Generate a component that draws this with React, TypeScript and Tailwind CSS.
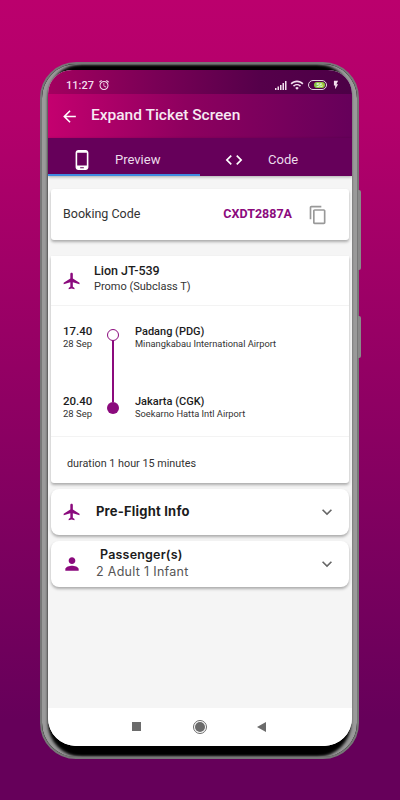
import { MdAlarm, MdArrowBack, MdCode, MdContentCopy, MdFlashOn, MdFlight, MdKeyboardArrowDown, MdPerson, MdPhoneAndroid, MdWifi } from "react-icons/md";

const roboto = { fontFamily: "Roboto, sans-serif" };

function StatusBar() {
    return (
        <div className="h-[24px] shrink-0 flex items-center justify-between pt-[6px] pl-[18px] pr-[11px] bg-[linear-gradient(90deg,#a3005f,#7a0056_35%,#55004a_70%,#4c0046)] text-[#f3dfee]">
            <div className="flex items-center gap-[4px]">
                <span className="text-[11px] font-medium leading-none">11:27</span>
                <MdAlarm size={12} />
            </div>
            <div className="flex items-center gap-[3px]">
                <svg width="12" height="9" viewBox="0 0 12 9" fill="currentColor">
                    <rect x="0" y="7" width="1.5" height="2" />
                    <rect x="2.5" y="5.5" width="1.5" height="3.5" />
                    <rect x="5" y="4" width="1.5" height="5" />
                    <rect x="7.5" y="2" width="1.5" height="7" />
                    <rect x="10" y="0" width="1.5" height="9" />
                </svg>
                <MdWifi size={14} />
                <svg width="20" height="10" viewBox="0 0 20 10" className="ml-[1px]">
                    <rect x="0.5" y="0.5" width="18" height="9" rx="4.5" fill="none" stroke="#e6d5e2" strokeWidth="1" />
                    <rect x="6" y="2" width="11" height="6" rx="3" fill="#8cc63f" />
                    <text x="11.5" y="7.3" fontSize="6" textAnchor="middle" fill="#fff">56</text>
                </svg>
                <MdFlashOn size={10} />
            </div>
        </div>
    );
}

function TabBar() {
    return (
        <div className="h-[38px] shrink-0 flex bg-[#66005a] text-[#ecdcea] text-[13px] shadow-[0_1px_3px_rgba(0,0,0,0.3)] z-10">
            <div className="w-[152px] h-full flex items-center border-b-2 border-[#3f8ae0] pt-[8px] pl-[23px]">
                <MdPhoneAndroid size={22} className="text-white" />
                <span className="ml-[22px]">Preview</span>
            </div>
            <div className="flex-1 h-full flex items-center pt-[6px] pl-[24px]">
                <MdCode size={20} className="text-white" />
                <span className="ml-[24px]">Code</span>
            </div>
        </div>
    );
}

function FlightStop({ time, city, airport }: { time: string; city: string; airport: string }) {
    return (
        <div className="flex items-start">
            <div className="w-[84px] pl-[12px]">
                <p className="text-[11.5px] font-medium text-[#1c1c1c] leading-[13px]">{time}</p>
                <p className="text-[9.5px] text-[#333] leading-[11px]">28 Sep</p>
            </div>
            <div>
                <p className="text-[11px] font-medium text-[#1c1c1c] leading-[13px]">{city}</p>
                <p className="text-[9.3px] text-[#333] leading-[11px]">{airport}</p>
            </div>
        </div>
    );
}

function FlightCard() {
    return (
        <div className="mt-[16px] mx-[3px] h-[227px] bg-white rounded-b-[3px] shadow-[0_2px_3px_rgba(0,0,0,0.3)] flex flex-col">
            <div className="h-[50px] flex items-center border-b border-[#f3f3f3]">
                <MdFlight size={20} className="ml-[11px] text-[#8b0a7d]" />
                <div className="ml-[12px] -mt-[4px]">
                    <p className="text-[12.5px] font-medium text-[#1c1c1c] leading-[16px]">Lion JT-539</p>
                    <p className="text-[11px] text-[#333] leading-[16px]">Promo (Subclass T)</p>
                </div>
            </div>
            <div className="relative h-[131px] border-b border-[#f3f3f3] pt-[19px] flex flex-col gap-[46px]">
                <FlightStop time="17.40" city="Padang (PDG)" airport="Minangkabau International Airport" />
                <FlightStop time="20.40" city="Jakarta (CGK)" airport="Soekarno Hatta Intl Airport" />
                <div className="absolute left-[56px] top-[23px] w-[12px] h-[12px] rounded-full border-[1.5px] border-[#8b0a7d] bg-white z-10" />
                <div className="absolute left-[61px] top-[32px] w-[1.5px] h-[64px] bg-[#8b0a7d]" />
                <div className="absolute left-[56px] top-[96px] w-[12px] h-[12px] rounded-full bg-[#8b0a7d]" />
            </div>
            <div className="flex-1 flex items-center pl-[16px] pt-[8px] text-[10.8px] text-[#333]">duration 1 hour 15 minutes</div>
        </div>
    );
}

export default function App() {
    return (
        <div className="relative w-[400px] h-[800px] overflow-hidden pt-[62px] pl-[40px] bg-[linear-gradient(180deg,#bb006d_0%,#b3006b_15%,#66005a_90%,#66005a_100%)]" style={roboto}>
            {/* volume and power keys */}
            <div className="absolute left-[358px] top-[190px] w-[3px] h-[80px] bg-[#8a8a8a] rounded-r-[2px]" />
            <div className="absolute left-[358px] top-[316px] w-[3px] h-[42px] bg-[#8a8a8a] rounded-r-[2px]" />

            <div className="w-[319px] h-[697px] rounded-[36px] border-2 border-[#777] bg-black pt-[6px] pl-[6px] pr-[5px] pb-[11px] shadow-[inset_6px_0_3px_#9a9a9a,inset_-6px_0_3px_#9a9a9a]">
                <div className="h-full rounded-t-[24px] rounded-b-[28px] overflow-hidden bg-white flex flex-col">
                    <StatusBar />
                    <div className="h-[44px] shrink-0 flex items-center pl-[12px] bg-[linear-gradient(90deg,#c4006f,#8e005f_45%,#66005a_100%)]">
                        <MdArrowBack size={19} className="text-white" />
                        <span className="ml-[12px] text-[15.5px] font-medium text-[#f7e9f3]">Expand Ticket Screen</span>
                    </div>
                    <TabBar />

                    <div className="h-[532px] shrink-0 bg-[#f5f5f5] pt-[13px]">
                        <div className="mx-[3px] h-[51px] bg-white rounded-[3px] shadow-[0_2px_3px_rgba(0,0,0,0.3)] flex items-center pl-[12px] pr-[21px]">
                            <span className="text-[12.5px] text-[#333]">Booking Code</span>
                            <span className="ml-auto text-[12.5px] font-bold text-[#8b0a7d]">CXDT2887A</span>
                            <MdContentCopy size={20} className="ml-[16px] text-[#999]" />
                        </div>

                        <FlightCard />

                        <div className="mt-[6px] mx-[3px] h-[46px] bg-white rounded-[8px] shadow-[0_2px_3px_rgba(0,0,0,0.3)] flex items-center pl-[11px] pr-[12px]">
                            <MdFlight size={20} className="text-[#8b0a7d]" />
                            <span className="ml-[14px] -mt-[1px] text-[13px] font-bold text-[#1c1c1c] tracking-[0.2px]" style={{ fontFamily: "Inter, sans-serif" }}>Pre-Flight Info</span>
                            <MdKeyboardArrowDown size={20} className="ml-auto -mt-[1px] text-[#666]" />
                        </div>

                        <div className="mt-[6px] mx-[3px] h-[46px] bg-white rounded-[8px] shadow-[0_2px_3px_rgba(0,0,0,0.3)] flex items-center pl-[11px] pr-[12px]" style={{ fontFamily: "Inter, sans-serif" }}>
                            <MdPerson size={20} className="text-[#8b0a7d]" />
                            <div className="ml-[14px] -mt-[2px]">
                                <p className="pl-[4px] text-[12.5px] font-semibold text-[#1c1c1c] tracking-[0.2px] leading-[17px]">Passenger(s)</p>
                                <p className="text-[12.5px] text-[#555] tracking-[0.3px] leading-[17px]">2 Adult 1 Infant</p>
                            </div>
                            <MdKeyboardArrowDown size={20} className="ml-auto -mt-[1px] text-[#666]" />
                        </div>
                    </div>

                    <div className="flex-1 flex items-center pl-[84px] pb-[1px] bg-white">
                        <div className="w-[9px] h-[9px] bg-[#6b6b6b]" />
                        <div className="ml-[52px] w-[14px] h-[14px] rounded-full border border-[#6b6b6b] flex items-center justify-center">
                            <div className="w-[10px] h-[10px] rounded-full bg-[#6b6b6b]" />
                        </div>
                        <svg width="9" height="10" viewBox="0 0 9 10" className="ml-[50px]">
                            <polygon points="9,0 9,10 0,5" fill="#6b6b6b" />
                        </svg>
                    </div>
                </div>
            </div>
        </div>
    );
}
